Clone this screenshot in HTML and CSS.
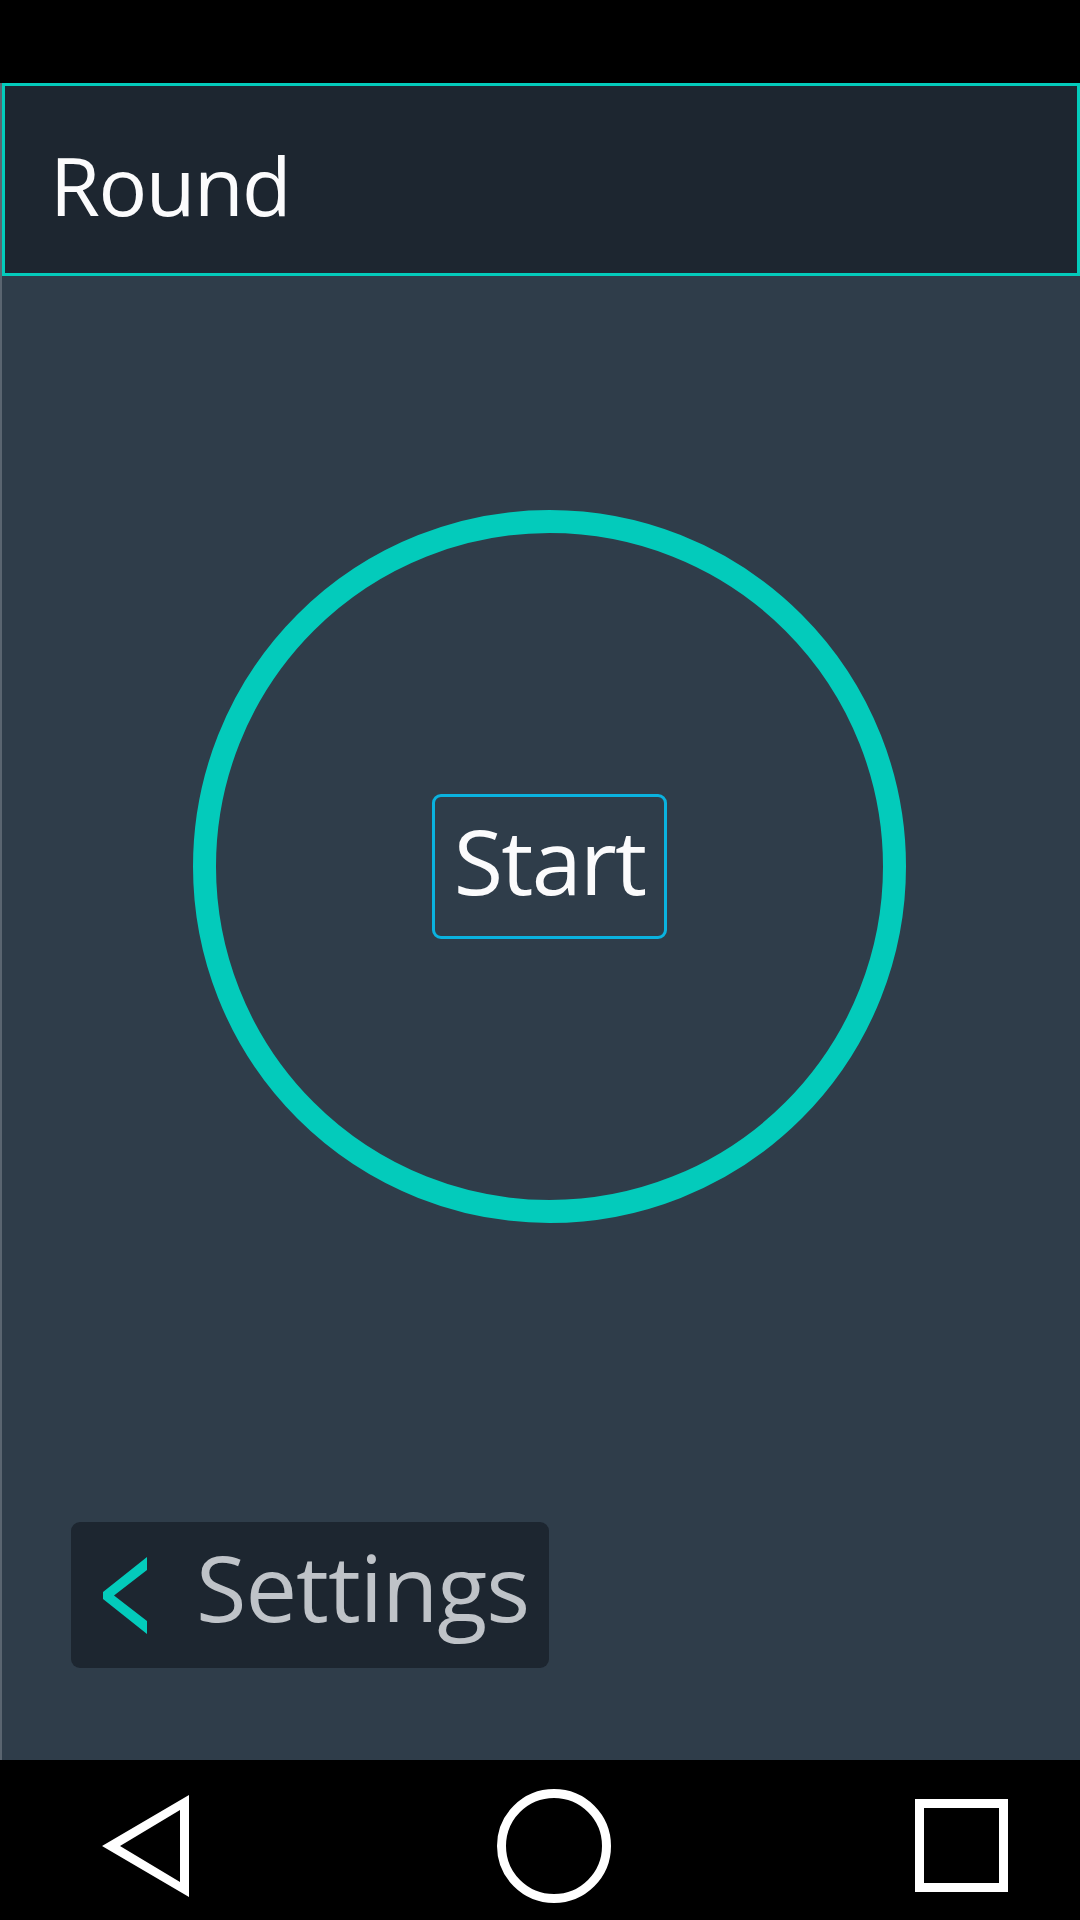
FILE: index.html
```html
<!DOCTYPE html>
<html>
<head>
<meta charset="utf-8">
<link rel="stylesheet" href="styles.css">
</head>
<body>
<div class="screen">
  <div class="status-bar"></div>
  <div class="app">
    <header class="title-bar"><h1 class="title">Round</h1></header>
    <main class="stage">
      <div class="ring">
        <button class="start-btn">Start</button>
      </div>
    </main>
    <footer class="actions">
      <button class="settings-btn">
        <svg class="chevron" width="44" height="77" viewBox="0 0 44 77"><polygon points="44,0 44,13 11,38.5 44,64 44,77 0,42 0,35" fill="#03cbbb"/></svg>
        <span class="settings-label">Settings</span>
      </button>
    </footer>
  </div>
  <nav class="nav-bar">
    <svg class="nav-back" width="87" height="102" viewBox="0 0 87 102"><path fill="#fff" fill-rule="evenodd" d="M0 51 L87 0 L87 102 Z M18 51 L78 15 L78 87 Z"/></svg>
    <svg class="nav-home" width="114" height="114" viewBox="0 0 114 114"><circle cx="57" cy="57" r="52.5" fill="none" stroke="#fff" stroke-width="9"/></svg>
    <svg class="nav-recent" width="93" height="93" viewBox="0 0 93 93"><rect x="4.5" y="4.5" width="84" height="84" fill="none" stroke="#fff" stroke-width="9"/></svg>
  </nav>
</div>
</body>
</html>
```

FILE: styles.css
```css
* { box-sizing: border-box; }
html, body { margin: 0; padding: 0; background: #000; }
body { font-family: "Open Sans", "Noto Sans", sans-serif; }

.screen { width: 1080px; height: 1920px; display: flex; flex-direction: column; background: #000; }

.status-bar { height: 83px; flex: none; background: #000; }

.app {
  height: 1677px;
  flex: none;
  background: #2f3d4a;
  border-left: 2px solid #5a6570;
  display: flex;
  flex-direction: column;
}

.title-bar {
  height: 193px;
  border: 3px solid #03cbbb;
  background: #1d2630;
  padding: 58px 0 0 45px;
}
.title {
  margin: 0;
  font-weight: 400;
  font-size: 81px;
  line-height: 81px;
  letter-spacing: -1.5px;
  color: #fbfbfc;
}

.stage { padding: 234px 0 0 191px; }

.ring {
  width: 713px;
  height: 713px;
  border-radius: 50%;
  border: 23px solid #03cbbb;
  display: flex;
  align-items: center;
  justify-content: center;
}

.start-btn {
  width: 235px;
  height: 145px;
  border: 3px solid #0ab2df;
  border-radius: 9px;
  background: transparent;
  color: #fbfbfc;
  font-family: "Open Sans", "Noto Sans", sans-serif;
  font-size: 90px;
  line-height: 90px;
  letter-spacing: -1.75px;
  padding: 0 0 14px 0;
  margin: 0;
  display: flex;
  align-items: center;
  justify-content: center;
}

.actions { padding: 299px 0 0 69px; }

.settings-btn {
  width: 478px;
  height: 146px;
  border: none;
  border-radius: 9px;
  background: #1d2630;
  display: flex;
  align-items: center;
  padding: 0 0 0 32px;
  margin: 0;
  gap: 49px;
}
.chevron { flex: none; display: block; }
.settings-label {
  font-family: "Open Sans", "Noto Sans", sans-serif;
  font-size: 92px;
  line-height: 92px;
  color: #bfc3c8;
  margin-bottom: 16px;
  letter-spacing: -1px;
}

.nav-bar {
  height: 160px;
  flex: none;
  background: #000;
  display: flex;
  align-items: center;
  padding: 11px 0 0 102px;
}
.nav-bar svg { display: block; flex: none; }
.nav-home { margin-left: 308px; }
.nav-recent { margin-left: 304px; }
```
